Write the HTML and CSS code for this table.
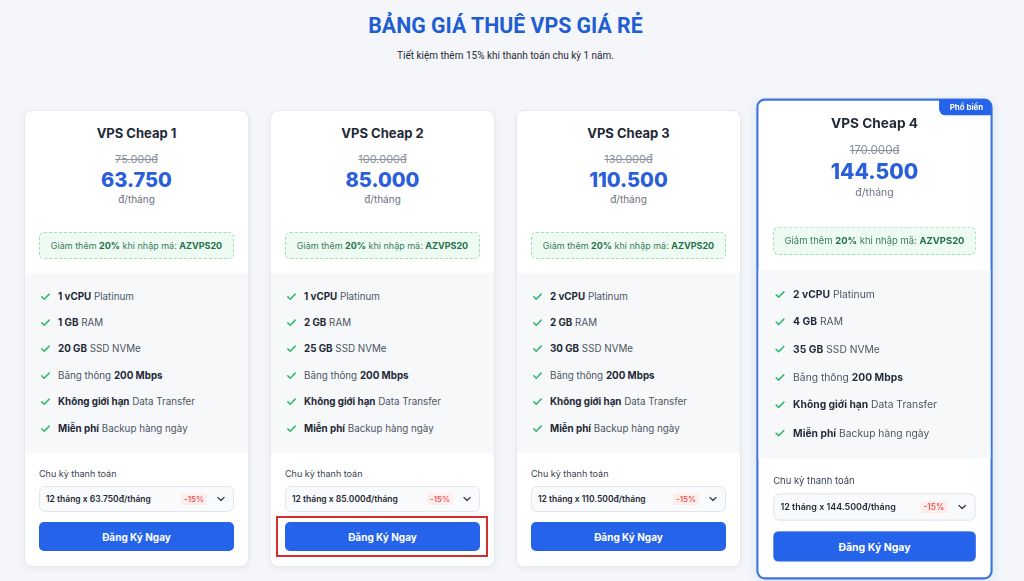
FILE: index.html
```html
<!DOCTYPE html>
<html lang="vi">
<head>
<meta charset="utf-8">
<title>Bảng giá thuê VPS giá rẻ</title>
<link rel="stylesheet" href="styles.css">
</head>
<body>
<main class="page">
  <header class="head">
    <h1 class="head-title">BẢNG GIÁ THUÊ VPS GIÁ RẺ</h1>
    <p class="head-sub">Tiết kiệm thêm 15% khi thanh toán chu kỳ 1 năm.</p>
  </header>

  <section class="plans">
    <article class="card">
      <div class="card-top">
        <h2 class="plan-name">VPS Cheap 1</h2>
        <div class="old-price">75.000đ</div>
        <div class="price">63.750</div>
        <div class="unit">đ/tháng</div>
        <div class="promo">Giảm thêm <b>20%</b> khi nhập mã: <b>AZVPS20</b></div>
      </div>
      <ul class="features">
        <li><svg class="check" viewBox="0 0 12 12"><path d="M2 6.4l2.6 2.5L10 3.4"/></svg><span><b>1 vCPU</b> Platinum</span></li>
        <li><svg class="check" viewBox="0 0 12 12"><path d="M2 6.4l2.6 2.5L10 3.4"/></svg><span><b>1 GB</b> RAM</span></li>
        <li><svg class="check" viewBox="0 0 12 12"><path d="M2 6.4l2.6 2.5L10 3.4"/></svg><span><b>20 GB</b> SSD NVMe</span></li>
        <li><svg class="check" viewBox="0 0 12 12"><path d="M2 6.4l2.6 2.5L10 3.4"/></svg><span>Băng thông <b>200 Mbps</b></span></li>
        <li><svg class="check" viewBox="0 0 12 12"><path d="M2 6.4l2.6 2.5L10 3.4"/></svg><span><b>Không giới hạn</b> Data Transfer</span></li>
        <li><svg class="check" viewBox="0 0 12 12"><path d="M2 6.4l2.6 2.5L10 3.4"/></svg><span><b>Miễn phí</b> Backup hàng ngày</span></li>
      </ul>
      <div class="card-bottom">
        <div class="cycle-label">Chu kỳ thanh toán</div>
        <div class="select"><span class="select-text">12 tháng x 63.750đ/tháng</span><span class="off">-15%</span><svg class="chev" viewBox="0 0 10 10"><path d="M2 3.5l3 3 3-3"/></svg></div>
        <div class="btn-wrap"><button class="btn">Đăng Ký Ngay</button></div>
      </div>
    </article>

    <article class="card">
      <div class="card-top">
        <h2 class="plan-name">VPS Cheap 2</h2>
        <div class="old-price">100.000đ</div>
        <div class="price">85.000</div>
        <div class="unit">đ/tháng</div>
        <div class="promo">Giảm thêm <b>20%</b> khi nhập mã: <b>AZVPS20</b></div>
      </div>
      <ul class="features">
        <li><svg class="check" viewBox="0 0 12 12"><path d="M2 6.4l2.6 2.5L10 3.4"/></svg><span><b>1 vCPU</b> Platinum</span></li>
        <li><svg class="check" viewBox="0 0 12 12"><path d="M2 6.4l2.6 2.5L10 3.4"/></svg><span><b>2 GB</b> RAM</span></li>
        <li><svg class="check" viewBox="0 0 12 12"><path d="M2 6.4l2.6 2.5L10 3.4"/></svg><span><b>25 GB</b> SSD NVMe</span></li>
        <li><svg class="check" viewBox="0 0 12 12"><path d="M2 6.4l2.6 2.5L10 3.4"/></svg><span>Băng thông <b>200 Mbps</b></span></li>
        <li><svg class="check" viewBox="0 0 12 12"><path d="M2 6.4l2.6 2.5L10 3.4"/></svg><span><b>Không giới hạn</b> Data Transfer</span></li>
        <li><svg class="check" viewBox="0 0 12 12"><path d="M2 6.4l2.6 2.5L10 3.4"/></svg><span><b>Miễn phí</b> Backup hàng ngày</span></li>
      </ul>
      <div class="card-bottom">
        <div class="cycle-label">Chu kỳ thanh toán</div>
        <div class="select"><span class="select-text">12 tháng x 85.000đ/tháng</span><span class="off">-15%</span><svg class="chev" viewBox="0 0 10 10"><path d="M2 3.5l3 3 3-3"/></svg></div>
        <div class="btn-wrap"><button class="btn">Đăng Ký Ngay</button><span class="mark"></span></div>
      </div>
    </article>

    <article class="card">
      <div class="card-top">
        <h2 class="plan-name">VPS Cheap 3</h2>
        <div class="old-price">130.000đ</div>
        <div class="price">110.500</div>
        <div class="unit">đ/tháng</div>
        <div class="promo">Giảm thêm <b>20%</b> khi nhập mã: <b>AZVPS20</b></div>
      </div>
      <ul class="features">
        <li><svg class="check" viewBox="0 0 12 12"><path d="M2 6.4l2.6 2.5L10 3.4"/></svg><span><b>2 vCPU</b> Platinum</span></li>
        <li><svg class="check" viewBox="0 0 12 12"><path d="M2 6.4l2.6 2.5L10 3.4"/></svg><span><b>2 GB</b> RAM</span></li>
        <li><svg class="check" viewBox="0 0 12 12"><path d="M2 6.4l2.6 2.5L10 3.4"/></svg><span><b>30 GB</b> SSD NVMe</span></li>
        <li><svg class="check" viewBox="0 0 12 12"><path d="M2 6.4l2.6 2.5L10 3.4"/></svg><span>Băng thông <b>200 Mbps</b></span></li>
        <li><svg class="check" viewBox="0 0 12 12"><path d="M2 6.4l2.6 2.5L10 3.4"/></svg><span><b>Không giới hạn</b> Data Transfer</span></li>
        <li><svg class="check" viewBox="0 0 12 12"><path d="M2 6.4l2.6 2.5L10 3.4"/></svg><span><b>Miễn phí</b> Backup hàng ngày</span></li>
      </ul>
      <div class="card-bottom">
        <div class="cycle-label">Chu kỳ thanh toán</div>
        <div class="select"><span class="select-text">12 tháng x 110.500đ/tháng</span><span class="off">-15%</span><svg class="chev" viewBox="0 0 10 10"><path d="M2 3.5l3 3 3-3"/></svg></div>
        <div class="btn-wrap"><button class="btn">Đăng Ký Ngay</button></div>
      </div>
    </article>

    <article class="card card-popular">
      <span class="badge">Phổ biến</span>
      <div class="card-top">
        <h2 class="plan-name">VPS Cheap 4</h2>
        <div class="old-price">170.000đ</div>
        <div class="price">144.500</div>
        <div class="unit">đ/tháng</div>
        <div class="promo">Giảm thêm <b>20%</b> khi nhập mã: <b>AZVPS20</b></div>
      </div>
      <ul class="features">
        <li><svg class="check" viewBox="0 0 12 12"><path d="M2 6.4l2.6 2.5L10 3.4"/></svg><span><b>2 vCPU</b> Platinum</span></li>
        <li><svg class="check" viewBox="0 0 12 12"><path d="M2 6.4l2.6 2.5L10 3.4"/></svg><span><b>4 GB</b> RAM</span></li>
        <li><svg class="check" viewBox="0 0 12 12"><path d="M2 6.4l2.6 2.5L10 3.4"/></svg><span><b>35 GB</b> SSD NVMe</span></li>
        <li><svg class="check" viewBox="0 0 12 12"><path d="M2 6.4l2.6 2.5L10 3.4"/></svg><span>Băng thông <b>200 Mbps</b></span></li>
        <li><svg class="check" viewBox="0 0 12 12"><path d="M2 6.4l2.6 2.5L10 3.4"/></svg><span><b>Không giới hạn</b> Data Transfer</span></li>
        <li><svg class="check" viewBox="0 0 12 12"><path d="M2 6.4l2.6 2.5L10 3.4"/></svg><span><b>Miễn phí</b> Backup hàng ngày</span></li>
      </ul>
      <div class="card-bottom">
        <div class="cycle-label">Chu kỳ thanh toán</div>
        <div class="select"><span class="select-text">12 tháng x 144.500đ/tháng</span><span class="off">-15%</span><svg class="chev" viewBox="0 0 10 10"><path d="M2 3.5l3 3 3-3"/></svg></div>
        <div class="btn-wrap"><button class="btn">Đăng Ký Ngay</button></div>
      </div>
    </article>
  </section>
</main>
</body>
</html>
```

FILE: styles.css
```css
* { box-sizing: border-box; }

html, body {
  margin: 0;
  padding: 0;
  background: #f4f6f9;
  font-family: Inter, "Noto Sans", sans-serif;
  color: #1f2937;
  overflow: hidden;
}

.page {
  width: 1011px;
  height: 581px;
}

.head {
  text-align: center;
  padding-top: 11px;
}

.head-title {
  margin: 0;
  font-family: Roboto, "Liberation Sans", sans-serif;
  font-weight: 700;
  font-size: 21.3px;
  line-height: 30px;
  color: #1f5dd3;
}

.head-sub {
  margin: 8px 0 0;
  font-family: Roboto, "Liberation Sans", sans-serif;
  font-size: 10px;
  line-height: 14px;
  color: #1f2937;
}

.plans {
  display: flex;
  gap: 21px;
  width: 963px;
  margin: 47px auto 0;
  align-items: flex-start;
}

.card {
  position: relative;
  width: 225px;
  flex: none;
  background: #fff;
  border: 1px solid #e6e9ee;
  border-radius: 8px;
  box-shadow: 0 2px 6px rgba(30, 41, 59, 0.06);
}

.card-popular {
  border: 2px solid #3f74dc;
  transform: scale(1.05);
  box-shadow: 0 4px 12px rgba(37, 99, 235, 0.12);
}

.card-popular .card-top { padding-top: 12px; }

.badge {
  position: absolute;
  top: -1px;
  right: -1px;
  background: #2563eb;
  color: #fff;
  font-size: 7.5px;
  font-weight: 700;
  line-height: 15px;
  padding: 0 8px 0 10px;
  border-radius: 0 7px 0 6px;
}

.card-top {
  padding: 13px 14px 14px;
  text-align: center;
  border-radius: 8px 8px 0 0;
}

.plan-name {
  margin: 0;
  font-size: 13px;
  line-height: 18px;
  font-weight: 700;
  color: #1f2937;
}

.old-price {
  margin-top: 8px;
  font-size: 11px;
  line-height: 18px;
  color: #8b929c;
  text-decoration: line-through;
}

.price {
  font-size: 20px;
  line-height: 24px;
  font-weight: 800;
  color: #2a5fd9;
}

.unit {
  font-size: 10px;
  line-height: 14px;
  color: #6b7280;
}

.promo {
  margin-top: 26px;
  height: 27px;
  line-height: 25px;
  border: 1px dashed #9fe0bb;
  background: #edfbf3;
  border-radius: 5px;
  font-size: 9px;
  color: #3d7a58;
}

.promo b {
  color: #237048;
  font-weight: 700;
}

.features {
  list-style: none;
  margin: 0;
  padding: 10px 15px 12px;
  background: #f7f8fa;
}

.features li {
  display: flex;
  align-items: center;
  gap: 7px;
  height: 26.4px;
  font-size: 9.8px;
  color: #4b5563;
}

.features b {
  color: #1f2937;
  font-weight: 700;
}

.check {
  width: 11px;
  height: 11px;
  flex: none;
  fill: none;
  stroke: #2fb86a;
  stroke-width: 1.6;
  stroke-linecap: round;
  stroke-linejoin: round;
}

.card-bottom {
  padding: 14px 14px 15px;
}

.cycle-label {
  font-size: 9px;
  line-height: 14px;
  color: #374151;
}

.select {
  margin-top: 5px;
  height: 26px;
  display: flex;
  align-items: center;
  padding: 0 7px 0 6px;
  background: #f9fafb;
  border: 1px solid #e3e6eb;
  border-radius: 6px;
  font-size: 8.5px;
  font-weight: 600;
  color: #1f2937;
}

.select-text { flex: 1; }

.off {
  color: #ef4444;
  background: #fdeeee;
  font-size: 8px;
  font-weight: 500;
  line-height: 12px;
  padding: 0 3px;
  border-radius: 3px;
  margin-right: 9px;
}

.chev {
  width: 10px;
  height: 10px;
  fill: none;
  stroke: #374151;
  stroke-width: 1.3;
  stroke-linecap: round;
  stroke-linejoin: round;
}

.btn-wrap {
  position: relative;
  margin-top: 10px;
}

.btn {
  display: block;
  width: 100%;
  height: 29px;
  border: 0;
  border-radius: 5px;
  background: #2563eb;
  color: #fff;
  font-family: Inter, "Noto Sans", sans-serif;
  font-size: 10px;
  font-weight: 700;
  cursor: pointer;
}

.mark {
  position: absolute;
  left: -9px;
  right: -8px;
  top: -6px;
  bottom: -6px;
  border: 2px solid #d32f2f;
  pointer-events: none;
}
```
